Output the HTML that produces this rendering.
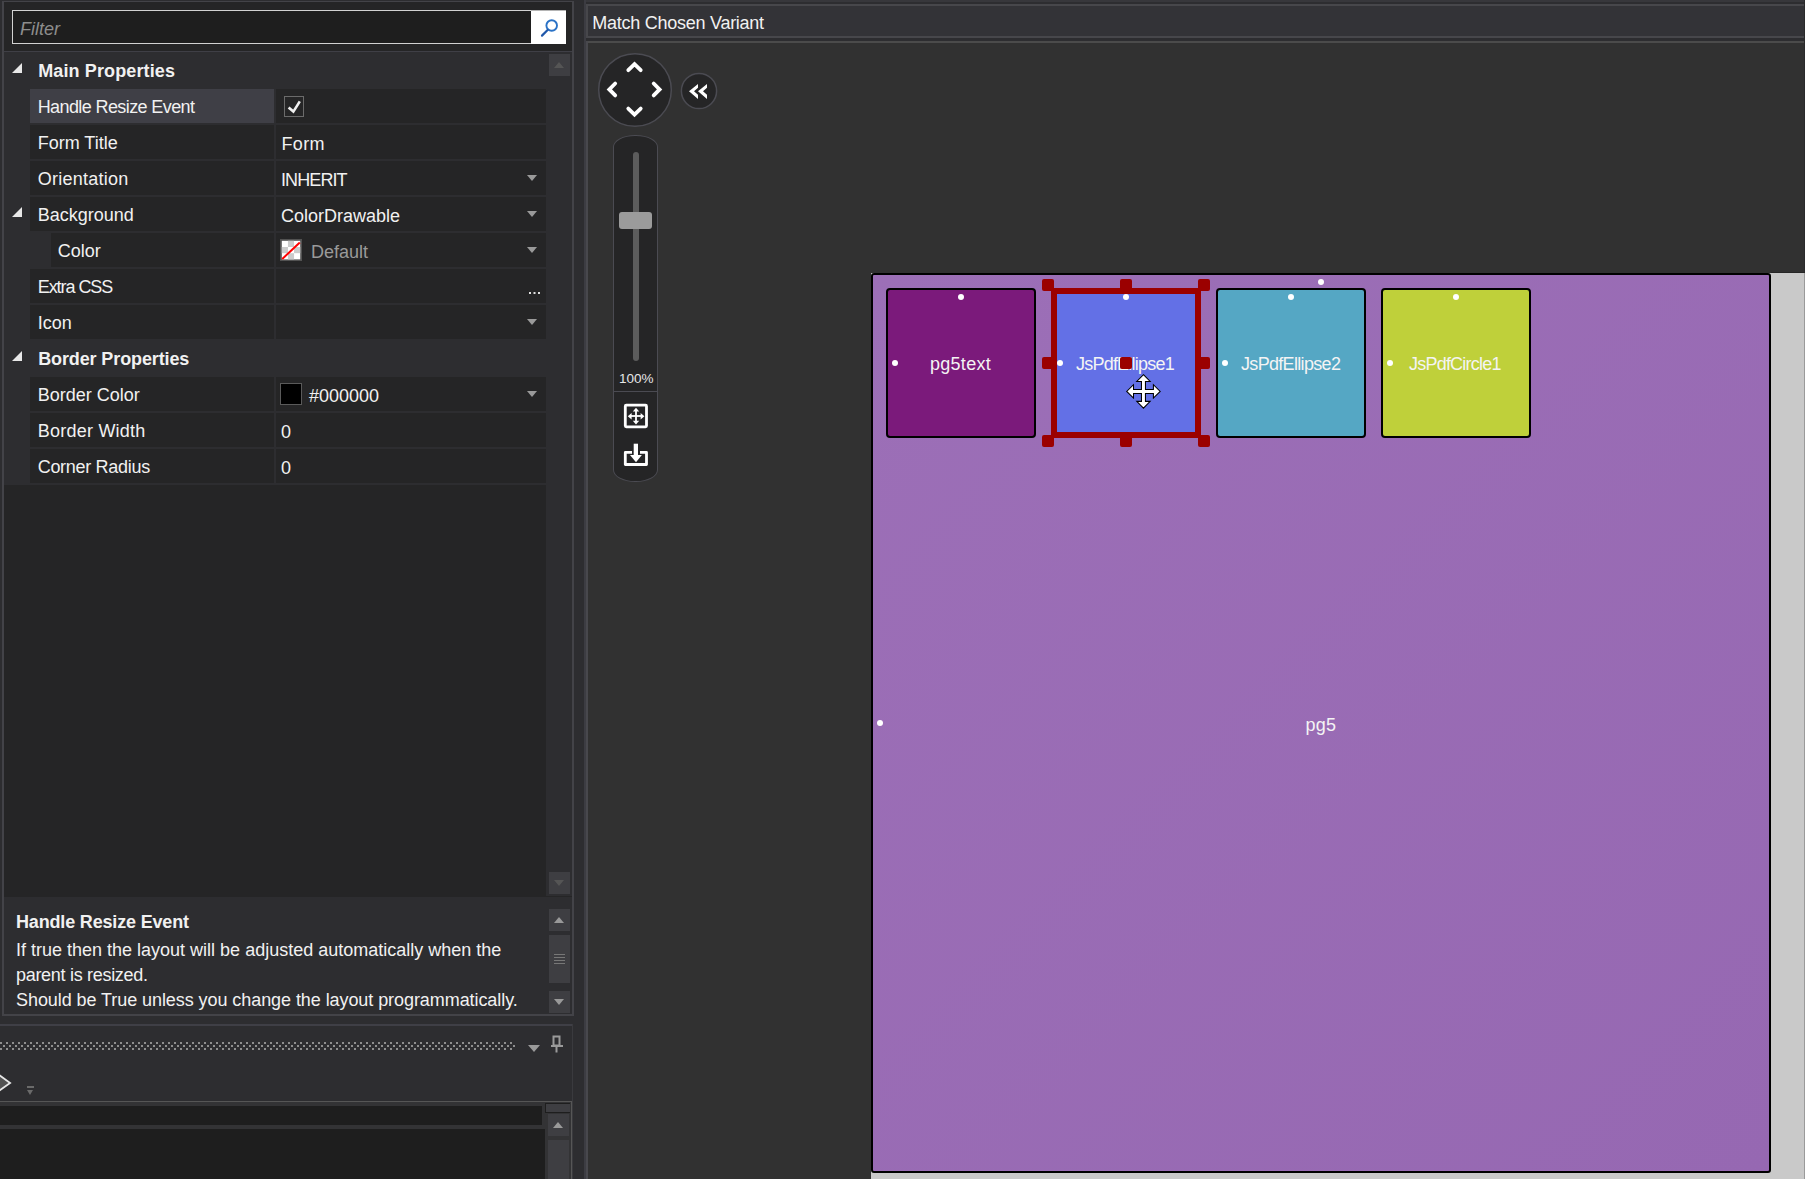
<!DOCTYPE html>
<html><head><meta charset="utf-8">
<style>
*{margin:0;padding:0;box-sizing:border-box}
html,body{width:1805px;height:1179px;overflow:hidden;background:#2d2d30;font-family:"Liberation Sans",sans-serif;color:#f1f1f1}
.a{position:absolute}
.t{position:absolute;white-space:pre;font-size:18px;line-height:18px}
.row{position:absolute;height:34px}
.lab{position:absolute;left:30px;width:244px;height:34px;background:#252526}
.val{position:absolute;left:276px;width:270px;height:34px;background:#252526}
.dd{position:absolute;left:527px;width:0;height:0;border-left:5.5px solid transparent;border-right:5.5px solid transparent;border-top:6px solid #9a9a9a}
.tri{position:absolute;width:0;height:0;border-left:10px solid transparent;border-bottom:10px solid #e8e8e8}
.sb{position:absolute;background:#3e3e42}
.dot{position:absolute;width:6px;height:6px;border-radius:50%;background:#fff}
.h{position:absolute;width:12px;height:12px;background:#9b0000;border-radius:2px}
.ch{position:absolute;width:150px;height:150px;border:2px solid #000;border-radius:4px}
.cl{position:absolute;white-space:pre;font-size:18px;line-height:18px;color:#f4f4f4}
</style></head><body>

<!-- LEFT PANEL -->
<div class="a" style="left:2px;top:1px;width:572px;height:1015px;border:2px solid #434348;border-top-width:1.5px;background:#2d2d30"></div>
<!-- filter area -->
<div class="a" style="left:4px;top:2px;width:568px;height:49px;background:#252526"></div>
<div class="a" style="left:4px;top:51px;width:568px;height:1px;background:#3f3f46"></div>
<div class="a" style="left:12px;top:10px;width:554px;height:34px;background:#1e1e1e;border:1.5px solid #d2d2d2;border-right:0"></div>
<div class="a" style="left:531px;top:10px;width:35px;height:34px;background:#fff;border-top:1.5px solid #b4b4b4"></div>
<svg class="a" style="left:536px;top:14px" width="26" height="26" viewBox="0 0 26 26"><circle cx="15.7" cy="11.5" r="5.3" fill="none" stroke="#2a72c6" stroke-width="1.9"/><line x1="6" y1="21.6" x2="11.6" y2="16" stroke="#2158aa" stroke-width="2.2" stroke-linecap="round"/></svg>
<div class="t" style="left:20px;top:20px;font-style:italic;color:#8d8d8d">Filter</div>

<!-- grid -->
<div class="a" style="left:4px;top:52px;width:542px;height:845px;background:#252526"></div>
<div class="a" style="left:4px;top:52px;width:542px;height:433px;background:#2d2d30"></div>
<div class="a" style="left:546px;top:52px;width:26px;height:845px;background:#2d2d30"></div>
<div class="sb" style="left:549px;top:54px;width:21px;height:22px"></div>
<div class="a" style="left:554px;top:62px;width:0;height:0;border-left:5.5px solid transparent;border-right:5.5px solid transparent;border-bottom:6px solid #555"></div>
<div class="sb" style="left:549px;top:872px;width:21px;height:22px"></div>
<div class="a" style="left:546px;top:896px;width:26px;height:2px;background:#252526"></div>
<div class="a" style="left:554px;top:880px;width:0;height:0;border-left:5.5px solid transparent;border-right:5.5px solid transparent;border-top:6px solid #555"></div>

<!-- Main Properties header -->
<div class="tri" style="left:12px;top:63px"></div>
<div class="t" style="left:38.2px;top:62px;font-weight:bold;letter-spacing:0.12px">Main Properties</div>

<!-- rows -->
<div class="lab" style="top:89px;background:#3f3f46"></div><div class="val" style="top:89px"></div>
<div class="t" style="left:37.7px;top:98px;letter-spacing:-0.6px">Handle Resize Event</div>
<div class="a" style="left:284px;top:96px;width:20px;height:21px;border:1.5px solid #6b6b6b"></div>
<svg class="a" style="left:284px;top:96px" width="20" height="21" viewBox="0 0 20 21"><polyline points="4.6,11.4 9.4,15.6 15.8,5.4" fill="none" stroke="#f0f0f0" stroke-width="2.6"/></svg>

<div class="lab" style="top:125px"></div><div class="val" style="top:125px"></div>
<div class="t" style="left:37.7px;top:134px">Form Title</div>
<div class="t" style="left:281.5px;top:135px;letter-spacing:0.35px">Form</div>

<div class="lab" style="top:161px"></div><div class="val" style="top:161px"></div>
<div class="t" style="left:37.7px;top:170px;letter-spacing:0.26px">Orientation</div>
<div class="t" style="left:281px;top:171px;letter-spacing:-0.9px">INHERIT</div>
<div class="dd" style="top:175px"></div>

<div class="lab" style="top:197px"></div><div class="val" style="top:197px"></div>
<div class="tri" style="left:12px;top:207px"></div>
<div class="t" style="left:37.7px;top:206px">Background</div>
<div class="t" style="left:281px;top:207px">ColorDrawable</div>
<div class="dd" style="top:211px"></div>

<div class="lab" style="top:233px;left:51px;width:223px"></div><div class="val" style="top:233px"></div>
<div class="t" style="left:57.7px;top:242px">Color</div>
<svg class="a" style="left:280px;top:239px" width="22" height="22" viewBox="0 0 22 22"><rect x="0" y="0" width="22" height="22" fill="#525252"/><rect x="1.8" y="1.8" width="18.4" height="18.6" fill="#fff"/><rect x="7.93" y="1.8" width="6.13" height="6.2" fill="#cbcbcb"/><rect x="1.8" y="8" width="6.13" height="6.2" fill="#cbcbcb"/><rect x="14.06" y="8" width="6.14" height="6.2" fill="#cbcbcb"/><rect x="7.93" y="14.2" width="6.13" height="6.2" fill="#cbcbcb"/><line x1="2.2" y1="20" x2="19.8" y2="3.4" stroke="#ff0000" stroke-width="2"/></svg>
<div class="t" style="left:311px;top:243px;color:#9a9a9a">Default</div>
<div class="dd" style="top:247px"></div>

<div class="lab" style="top:269px"></div><div class="val" style="top:269px"></div>
<div class="t" style="left:37.7px;top:278px;letter-spacing:-1.05px">Extra CSS</div>
<div class="a" style="left:528.5px;top:292px;width:2px;height:2px;background:#e0e0e0;box-shadow:4.5px 0 #e0e0e0,9px 0 #e0e0e0"></div>

<div class="lab" style="top:305px"></div><div class="val" style="top:305px"></div>
<div class="t" style="left:37.7px;top:314px">Icon</div>
<div class="dd" style="top:319px"></div>

<!-- Border Properties header -->
<div class="tri" style="left:12px;top:351px"></div>
<div class="t" style="left:38.2px;top:350px;font-weight:bold;letter-spacing:-0.12px">Border Properties</div>

<div class="lab" style="top:377px"></div><div class="val" style="top:377px"></div>
<div class="t" style="left:37.7px;top:386px">Border Color</div>
<div class="a" style="left:280px;top:383px;width:22px;height:22px;background:#000;border:1.5px solid #5a5a5a"></div>
<div class="t" style="left:309px;top:387px">#000000</div>
<div class="dd" style="top:391px"></div>

<div class="lab" style="top:413px"></div><div class="val" style="top:413px"></div>
<div class="t" style="left:37.7px;top:422px;letter-spacing:0.24px">Border Width</div>
<div class="t" style="left:281px;top:423px">0</div>

<div class="lab" style="top:449px"></div><div class="val" style="top:449px"></div>
<div class="t" style="left:37.7px;top:458px;letter-spacing:-0.3px">Corner Radius</div>
<div class="t" style="left:281px;top:459px">0</div>

<!-- description -->
<div class="a" style="left:4px;top:897px;width:568px;height:116px;background:#2d2d30"></div>
<div class="t" style="left:16px;top:912.5px;font-weight:bold;letter-spacing:-0.17px">Handle Resize Event</div>
<div class="t" style="left:16px;top:941px">If true then the layout will be adjusted automatically when the</div>
<div class="t" style="left:16px;top:965.5px;letter-spacing:-0.3px">parent is resized.</div>
<div class="t" style="left:16px;top:990.5px;letter-spacing:-0.07px">Should be True unless you change the layout programmatically.</div>
<div class="sb" style="left:549px;top:909px;width:21px;height:22px"></div>
<div class="a" style="left:554px;top:917px;width:0;height:0;border-left:5.5px solid transparent;border-right:5.5px solid transparent;border-bottom:6px solid #999"></div>
<div class="sb" style="left:549px;top:935px;width:21px;height:48px"></div>
<div class="a" style="left:554px;top:954px;width:11px;height:1px;background:#777;box-shadow:0 3px #777,0 6px #777,0 9px #777"></div>
<div class="sb" style="left:549px;top:991px;width:21px;height:22px"></div>
<div class="a" style="left:554px;top:999px;width:0;height:0;border-left:5.5px solid transparent;border-right:5.5px solid transparent;border-top:6px solid #999"></div>

<!-- LOWER PANELS -->
<div class="a" style="left:0;top:1024px;width:573px;height:2px;background:#3f3f46"></div>
<div class="a" style="left:572px;top:1024px;width:1.3px;height:155px;background:#3a3a3e"></div>
<svg class="a" style="left:0;top:1041px" width="516" height="10"><defs><pattern id="dp" width="6" height="6" patternUnits="userSpaceOnUse"><rect x="0" y="1" width="2" height="2" fill="#8e8e8e"/><rect x="3" y="4" width="2" height="2" fill="#8e8e8e"/></pattern></defs><rect x="0" y="0" width="516" height="10" fill="url(#dp)"/></svg>
<div class="a" style="left:528px;top:1045px;width:0;height:0;border-left:6px solid transparent;border-right:6px solid transparent;border-top:7px solid #9a9a9a"></div>
<svg class="a" style="left:550px;top:1035px" width="14" height="19" viewBox="0 0 14 19"><rect x="3.5" y="1.5" width="6" height="9" fill="none" stroke="#9a9a9a" stroke-width="2"/><line x1="1" y1="11" x2="13" y2="11" stroke="#9a9a9a" stroke-width="2"/><line x1="6.5" y1="11" x2="6.5" y2="17.5" stroke="#9a9a9a" stroke-width="2"/></svg>
<svg class="a" style="left:-8px;top:1070px" width="24" height="26" viewBox="0 0 24 26"><polygon points="4,2.7 18.1,12.9 4,23.1" fill="#525252" stroke="#e6e6e6" stroke-width="1.8" stroke-linejoin="miter"/></svg>
<div class="a" style="left:27px;top:1086px;width:7px;height:1.5px;background:#6a6a6a"></div>
<div class="a" style="left:27px;top:1090px;width:0;height:0;border-left:3.5px solid transparent;border-right:3.5px solid transparent;border-top:5px solid #6a6a6a"></div>
<div class="a" style="left:0;top:1101px;width:572px;height:78px;background:#333335"></div>
<div class="a" style="left:0;top:1101px;width:572px;height:1.3px;background:#565656"></div>
<div class="a" style="left:0;top:1106px;width:542px;height:19px;background:#1e1e1e"></div>
<div class="a" style="left:0;top:1129px;width:545px;height:50px;background:#1e1e1e"></div>
<div class="a" style="left:545px;top:1103px;width:25px;height:10px;background:#1e1e1e"></div>
<div class="sb" style="left:546px;top:1104px;width:24px;height:8px"></div>
<div class="sb" style="left:548px;top:1114px;width:21px;height:22px"></div>
<div class="a" style="left:553px;top:1122px;width:0;height:0;border-left:5.5px solid transparent;border-right:5.5px solid transparent;border-bottom:6px solid #9a9a9a"></div>
<div class="sb" style="left:548px;top:1140px;width:21px;height:39px"></div>
<div class="a" style="left:570.5px;top:1102px;width:1.5px;height:77px;background:#565656"></div>

<!-- RIGHT PANEL -->
<div class="a" style="left:586px;top:0;width:1219px;height:1.5px;background:#37373b"></div>
<div class="a" style="left:584px;top:0;width:2px;height:1179px;background:#3c3c42"></div>
<div class="a" style="left:586px;top:4px;width:1219px;height:1175px;background:#313131"></div>
<div class="a" style="left:586px;top:4px;width:1219px;height:34px;background:#333337"></div>
<div class="a" style="left:586px;top:4px;width:1219px;height:2px;background:#47474b"></div>
<div class="a" style="left:586px;top:36px;width:1219px;height:2px;background:#47474b"></div>
<div class="a" style="left:586px;top:4px;width:2px;height:34px;background:#47474b"></div>
<div class="a" style="left:586px;top:38px;width:1219px;height:2.7px;background:#2d2d30"></div>
<div class="a" style="left:586px;top:40.7px;width:1219px;height:2.2px;background:#4b4b4b"></div>
<div class="a" style="left:586px;top:40.7px;width:2px;height:1138.3px;background:#48484d"></div>
<div class="t" style="left:592.3px;top:14px;letter-spacing:-0.26px">Match Chosen Variant</div>

<!-- nav -->
<svg class="a" style="left:596px;top:51px" width="80" height="80" viewBox="0 0 80 80">
<circle cx="39" cy="39" r="36.3" fill="#252526" stroke="#4b4b52" stroke-width="1.5"/>
<g fill="none" stroke="#fff" stroke-width="3.8" stroke-linecap="round" stroke-linejoin="miter">
<polyline points="32.3,19.2 38.5,13.2 44.7,19.2"/>
<polyline points="32.3,57.6 38.5,63.6 44.7,57.6"/>
<polyline points="19.2,32.5 13.3,38.45 19.2,44.4"/>
<polyline points="57.7,32.5 63.6,38.45 57.7,44.4"/>
</g></svg>
<svg class="a" style="left:680px;top:72px" width="38" height="38" viewBox="0 0 38 38">
<circle cx="19" cy="19" r="17.6" fill="#252526" stroke="#4b4b52" stroke-width="1.5"/>
<polygon points="9,19.3 18,12 18,15.8 14,19.3 18,22.8 18,26.9" fill="#fff"/>
<polygon points="18,19.3 27,12 27,15.8 23,19.3 27,22.8 27,26.9" fill="#fff"/>
</svg>
<!-- zoom slider -->
<div class="a" style="left:613px;top:135px;width:45px;height:347px;background:#252526;border:1.5px solid #4b4b52;border-radius:22px/12px"></div>
<div class="a" style="left:632.5px;top:152px;width:6.5px;height:209px;background:#5c5c5c;border-radius:3.2px"></div>
<div class="a" style="left:619px;top:212px;width:33px;height:17px;background:#9b9b9b;border-radius:3px"></div>
<div class="t" style="left:619px;top:372px;font-size:13.5px;line-height:14px;color:#e6e6e6">100%</div>
<div class="a" style="left:614px;top:391px;width:43px;height:1.2px;background:#4b4b52"></div>
<svg class="a" style="left:622px;top:402px" width="28" height="28" viewBox="0 0 28 28">
<rect x="3.3" y="3.2" width="21.2" height="21.6" rx="1" fill="none" stroke="#fff" stroke-width="2.8"/>
<line x1="14" y1="8" x2="14" y2="20" stroke="#fff" stroke-width="1.8"/><line x1="8" y1="14" x2="20" y2="14" stroke="#fff" stroke-width="1.8"/>
<polygon points="14,5.8 10.8,9.6 17.2,9.6" fill="#fff"/><polygon points="14,22.6 10.8,18.8 17.2,18.8" fill="#fff"/>
<polygon points="5.8,14.2 9.6,11 9.6,17.4" fill="#fff"/><polygon points="22.4,14.2 18.6,11 18.6,17.4" fill="#fff"/>
</svg>
<svg class="a" style="left:622px;top:442px" width="28" height="26" viewBox="0 0 28 26">
<polyline points="10,10.4 3.3,10.4 3.3,22.5 24.5,22.5 24.5,10.4 18,10.4" fill="none" stroke="#fff" stroke-width="2.8" stroke-linejoin="round"/>
<rect x="11.7" y="1.7" width="4.3" height="12" fill="#fff"/>
<polygon points="8,13 19.9,13 14,20.3" fill="#fff"/>
</svg>

<!-- design surface -->
<div class="a" style="left:871px;top:273px;width:934px;height:906px;background:#c9c9c9"></div>
<div class="a" style="left:1803.5px;top:273px;width:1.5px;height:906px;background:#9a9a9a"></div>
<div class="a" style="left:1803.8px;top:0;width:1.2px;height:273px;background:#2a2a2b"></div>
<div class="a" style="left:1771px;top:272.3px;width:34px;height:1px;background:#262626"></div>
<div class="a" style="left:871px;top:273px;width:900px;height:900px;border:2px solid #000;border-radius:3px;background:linear-gradient(135deg,#9c6fb7 0%,#9668b2 100%)"></div>
<div class="dot" style="left:1318px;top:279px"></div>
<div class="dot" style="left:877px;top:720px"></div>
<div class="cl" style="left:1305.5px;top:716.3px;letter-spacing:0.3px">pg5</div>

<div class="ch" style="left:886px;top:288px;background:#7b1a7b"></div>
<div class="dot" style="left:958px;top:294px"></div>
<div class="dot" style="left:892px;top:360px"></div>
<div class="cl" style="left:930px;top:355px;letter-spacing:0.28px">pg5text</div>

<div class="a" style="left:1051px;top:288px;width:150px;height:150px;border:6px solid #9b0000;background:#6370e6"></div>
<div class="dot" style="left:1123px;top:294px"></div>
<div class="dot" style="left:1057px;top:360px"></div>
<div class="cl" style="left:1076px;top:355px;letter-spacing:-0.78px">JsPdfEllipse1</div>

<div class="ch" style="left:1216px;top:288px;background:#55a7c4"></div>
<div class="dot" style="left:1288px;top:294px"></div>
<div class="dot" style="left:1222px;top:360px"></div>
<div class="cl" style="left:1241px;top:355px;letter-spacing:-0.68px">JsPdfEllipse2</div>

<div class="ch" style="left:1381px;top:288px;background:#bfd03a"></div>
<div class="dot" style="left:1453px;top:294px"></div>
<div class="dot" style="left:1387px;top:360px"></div>
<div class="cl" style="left:1409px;top:355px;letter-spacing:-0.78px">JsPdfCircle1</div>

<!-- selection handles -->
<div class="h" style="left:1042px;top:279px"></div><div class="h" style="left:1120px;top:279px"></div><div class="h" style="left:1198px;top:279px"></div>
<div class="h" style="left:1042px;top:357px"></div><div class="h" style="left:1120px;top:357px"></div><div class="h" style="left:1198px;top:357px"></div>
<div class="h" style="left:1042px;top:435px"></div><div class="h" style="left:1120px;top:435px"></div><div class="h" style="left:1198px;top:435px"></div>

<!-- move cursor -->
<svg class="a" style="left:1125px;top:373px" width="37" height="37" viewBox="0 0 37 37">
<polygon points="18.45,1.65 25.15,8.45 20.45,8.45 20.45,16.40 28.40,16.40 28.40,11.70 35.20,18.40 28.40,25.10 28.40,20.40 20.45,20.40 20.45,28.35 25.15,28.35 18.45,35.15 11.75,28.35 16.45,28.35 16.45,20.40 8.50,20.40 8.50,25.10 1.70,18.40 8.50,11.70 8.50,16.40 16.45,16.40 16.45,8.45 11.75,8.45" fill="#fff" stroke="#000" stroke-width="1.05" stroke-linejoin="miter"/>
</svg>

</body></html>
